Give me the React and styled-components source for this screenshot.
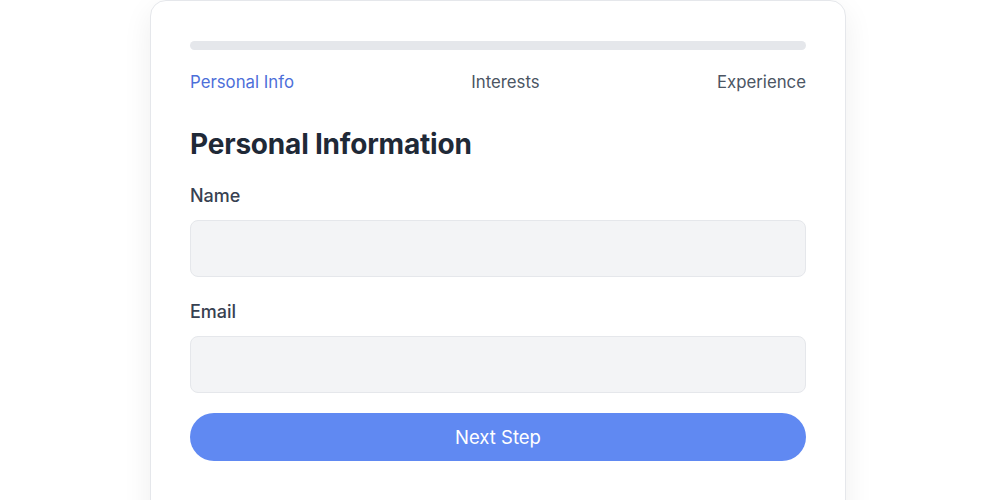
import React, { useState } from 'react';
import styled, { createGlobalStyle } from 'styled-components';

// //////////////// GLOBAL //////////////// //
const GlobalStyle = createGlobalStyle`
  * {
    box-sizing: border-box;
  }
  body {
    margin: 0;
    background: #ffffff;
    font-family: Inter, "Noto Sans", "Liberation Sans", sans-serif;
  }
`;

// //////////////// STYLED COMPONENTS //////////////// //
const Page = styled.div`
  display: flex;
  justify-content: center;
  padding-right: 4px;
  height: 500px;
  overflow: hidden;
`;

const Card = styled.div`
  width: 696px;
  height: 540px;
  padding: 40px 39px;
  background: #ffffff;
  border: 1px solid #e5e7eb;
  border-radius: 16px;
  box-shadow: 0 10px 30px rgba(0, 0, 0, 0.07);
`;

const ProgressTrack = styled.div`
  height: 9px;
  border-radius: 999px;
  background: #e5e7eb;
  overflow: hidden;
`;

const ProgressFill = styled.div`
  height: 100%;
  background: #6089f2;
  border-radius: 999px;
`;

const Steps = styled.div`
  display: flex;
  justify-content: space-between;
  margin-top: 20px;
`;

const Step = styled.span`
  font-size: 16.8px;
  line-height: 24px;
  color: ${(props) => (props.active ? '#4d6fd9' : '#4b5563')};
`;

const Heading = styled.h2`
  margin: 32px 0 20px;
  font-size: 28px;
  line-height: 36px;
  font-weight: 700;
  color: #1f2937;
  letter-spacing: -0.2px;
`;

const Field = styled.div`
  display: flex;
  flex-direction: column;
  gap: 11px;
  margin-bottom: 21px;
`;

const Label = styled.label`
  font-size: 18px;
  line-height: 27px;
  font-weight: 500;
  color: #374151;
`;

const Input = styled.input`
  height: 57px;
  padding: 0 16px;
  font-size: 16px;
  font-family: inherit;
  background: #f3f4f6;
  border: 1px solid #e5e7eb;
  border-radius: 8px;
  outline: none;
`;

const Button = styled.button`
  width: 100%;
  height: 48px;
  margin-top: -1px;
  font-family: inherit;
  font-size: 18.5px;
  color: #ffffff;
  background: #6089f2;
  border: none;
  border-radius: 999px;
  cursor: pointer;
`;

// //////////////// MAIN COMPONENT //////////////// //
const steps = ['Personal Info', 'Interests', 'Experience'];

const App = () => {
  const [name, setName] = useState('');
  const [email, setEmail] = useState('');
  const progress = 0;

  return (
    <>
      <GlobalStyle />
      <Page>
        <Card>
          <ProgressTrack>
            <ProgressFill style={{ width: `${progress}%` }} />
          </ProgressTrack>
          <Steps>
            {steps.map((step, index) => (
              <Step key={step} active={index === 0}>{step}</Step>
            ))}
          </Steps>
          <Heading>Personal Information</Heading>
          <Field>
            <Label htmlFor="name">Name</Label>
            <Input id="name" value={name} onChange={(e) => setName(e.target.value)} />
          </Field>
          <Field>
            <Label htmlFor="email">Email</Label>
            <Input id="email" type="email" value={email} onChange={(e) => setEmail(e.target.value)} />
          </Field>
          <Button>Next Step</Button>
        </Card>
      </Page>
    </>
  );
};

export default App;
